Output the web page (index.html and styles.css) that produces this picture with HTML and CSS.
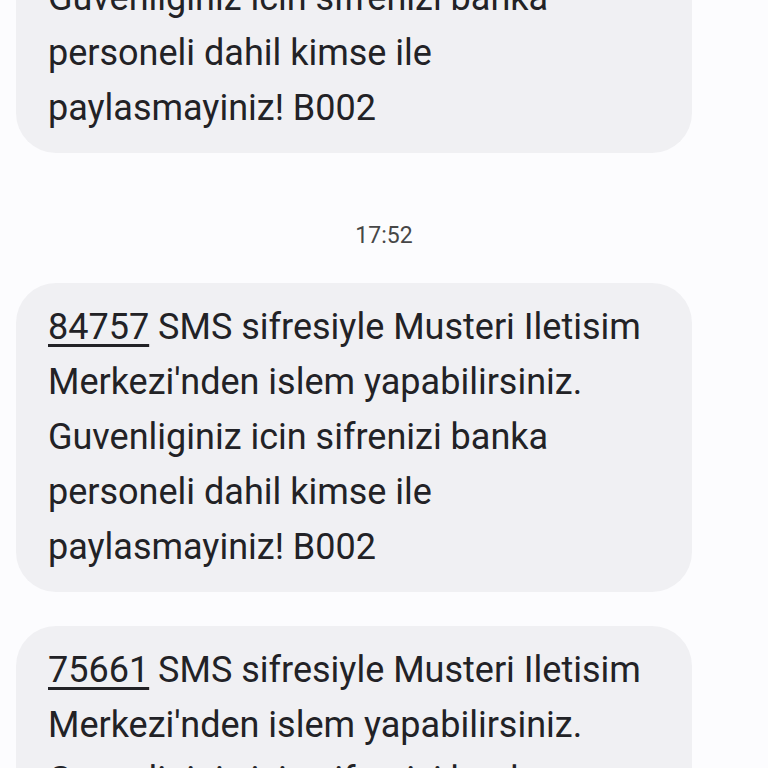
FILE: index.html
```html
<!DOCTYPE html>
<html lang="tr">
<head>
<meta charset="utf-8">
<link rel="stylesheet" href="styles.css">
</head>
<body>
<div class="thread">
  <div class="bubble">
    <p class="msg"><span class="code">31908</span> SMS sifresiyle Musteri Iletisim<br>Merkezi'nden islem yapabilirsiniz.<br>Guvenliginiz icin sifrenizi banka<br>personeli dahil kimse ile<br>paylasmayiniz! B002</p>
  </div>
  <div class="time">17:52</div>
  <div class="bubble">
    <p class="msg"><span class="code">84757</span> SMS sifresiyle Musteri Iletisim<br>Merkezi'nden islem yapabilirsiniz.<br>Guvenliginiz icin sifrenizi banka<br>personeli dahil kimse ile<br>paylasmayiniz! B002</p>
  </div>
  <div class="bubble gap">
    <p class="msg"><span class="code">75661</span> SMS sifresiyle Musteri Iletisim<br>Merkezi'nden islem yapabilirsiniz.<br>Guvenliginiz icin sifrenizi banka<br>personeli dahil kimse ile<br>paylasmayiniz! B002</p>
  </div>
</div>
</body>
</html>
```
FILE: styles.css
```css
html, body {
  margin: 0;
  padding: 0;
  background: #fcfcfe;
  overflow: hidden;
  height: 768px;
}
.thread {
  display: flex;
  flex-direction: column;
  align-items: flex-start;
  margin-top: -156px;
  padding: 0 16px;
}
.bubble {
  width: 676px;
  box-sizing: border-box;
  background: #f0f0f3;
  border-radius: 40px;
  padding: 17px 32px;
}
.bubble.gap {
  margin-top: 34px;
}
.msg {
  margin: 0;
  font-family: Roboto, "Noto Sans", sans-serif;
  font-size: 36px;
  line-height: 55px;
  color: #222226;
  white-space: nowrap;
}
.code {
  text-decoration: underline;
  text-decoration-thickness: 3px;
  text-underline-offset: 5px;
}
.time {
  align-self: stretch;
  text-align: center;
  font-family: Roboto, "Noto Sans", sans-serif;
  font-size: 23px;
  color: #474747;
  height: 130px;
  line-height: 166px;
}
```
